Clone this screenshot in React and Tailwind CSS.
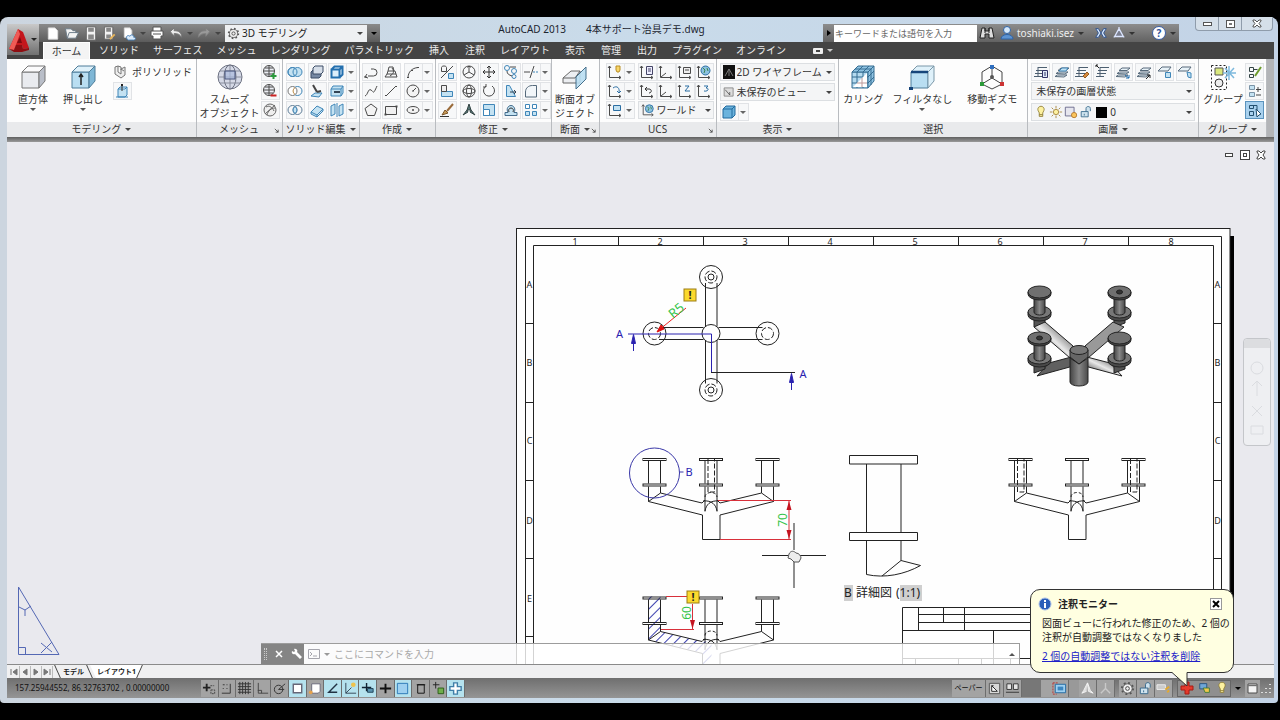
import { useState } from "react";

const B = "#3f86b8";
const L = "#c4e2f2";
const D = "#4a4a4a";

const axes = <path d="M2.5 2v11.500h11M1 4l1.500-2L4 4M12 12l2 1.500-2 1.500" stroke={D} />;
const sheets = (
  <path d="M4 6.500 7 4h8l-3 2.500zM2 9.500 4.500 8H14l-3 2zM1 12.500 3.500 11H13l-3 2z" fill="#e8f2f8" stroke="#56697a" />
);
const stack = <path d="M5 3.500h9M3 6.500h9M2 9.500h9M1 12.500h8M5 3v10" stroke="#4c5f70" />;

const drawings = {
  polysolid: <path d="M2 3l3-1v6l3 2V5l4-2v8l-4 3-6-4zM5 2l3 1v3M8 5l3 2" fill="#eee" stroke="#777" />,
  presspull: (
    <>
      <path d="M3 6h7l2-2v8l-2 2H3zM3 6l2-2h7" fill={L} stroke={B} />
      <path d="M7 8V2" stroke="#333" />
      <path d="M6 1h2v2H6z" fill="#222" />
      <path d="M1 14h12" stroke={B} />
    </>
  ),
  meshAdd: (
    <>
      <circle cx="7" cy="7" r="5.500" fill="#eceff5" stroke={D} />
      <path d="M1.500 7h11M7 1.500v11M3 4h8M3 10h8" stroke={D} />
      <path d="M11.500 9v6M8.500 12h6" stroke="#2a9a3c" strokeWidth="2" />
    </>
  ),
  meshSub: (
    <>
      <circle cx="7" cy="7" r="5.500" fill="#eceff5" stroke={D} />
      <path d="M1.500 7h11M7 1.500v11M3 4h8M3 10h8" stroke={D} />
      <path d="M8.500 12.500h6" stroke="#c22" strokeWidth="2" />
    </>
  ),
  meshRefine: (
    <>
      <circle cx="8" cy="8" r="6" fill="#eee" stroke="#666" />
      <path d="M3 12 13 3M4 5c3-2 6 0 8 4M5 13c1-4 4-7 8-7" stroke="#666" />
    </>
  ),
  union: (
    <>
      <circle cx="5.500" cy="8" r="4.500" fill={L} stroke={B} />
      <circle cx="10.500" cy="8" r="4.500" fill={L} stroke={B} />
      <circle cx="5.500" cy="8" r="4.500" stroke={B} />
    </>
  ),
  subtract: (
    <>
      <circle cx="10.500" cy="8" r="4.500" stroke={B} />
      <circle cx="5.500" cy="8" r="4.500" fill="#fff" stroke="#777" />
      <path d="M8 4.500c-2.500 2-2.500 5 0 7" stroke="#b9853c" />
    </>
  ),
  intersect: (
    <>
      <circle cx="5.500" cy="8" r="4.500" stroke="#5d7c96" />
      <circle cx="10.500" cy="8" r="4.500" stroke="#5d7c96" />
      <path d="M8 4.500c-2.500 2-2.500 5 0 7 2.500-2 2.500-5 0-7z" fill={L} stroke={B} />
    </>
  ),
  faces: (
    <>
      <path d="M2 8l2-2h8v6l-2 2H2z" fill="#7789a3" stroke="#3c4d66" />
      <path d="M4 4l2-2h8v6l-2 2H4z" fill="#d6dee8" stroke="#3c4d66" />
    </>
  ),
  slice: (
    <>
      <path d="M2 13l4-3h7l-3 4z" fill={L} stroke={B} />
      <path d="M4 2l4 7M8 9l4-1" stroke="#444" strokeWidth="2" />
    </>
  ),
  thicken: <path d="M2 10l6-6 6 3-6 6zM2 10v2l6 3v-2M14 7v2l-6 6" fill={L} stroke={B} />,
  shell: (
    <path d="M2.500 5.500h8v8h-8zM2.500 5.500l3-3h8v8l-3 3M10.500 5.500l3-3" fill="#dceefa" stroke="#236fae" strokeWidth="2" />
  ),
  imprint: (
    <>
      <path d="M2 6l2-3h10v7l-2 3H2zM2 6h10v7M12 6l2-3" fill={L} stroke={B} />
      <path d="M5 9h6" stroke="#345" strokeWidth="2" />
    </>
  ),
  separate: <path d="M2 4l4-2v10l-4 2zM10 4l4-2v10l-4 2zM8 1v14" fill={L} stroke={B} />,
  polyline: <path d="M1 13h3M5 12h5.500a3.500 3.500 0 0 0 0-7H8M4 10l-2 3 3 1" stroke={D} />,
  helix: <path d="M2 13h12l-1-3H4zM4 10l1-3h7l1 3M5 7l1-4h4l1 4M7 12c3-2 5-4 2-8" stroke={D} />,
  spline: <path d="M2 13C5 12 5 5 8 7s2 5 6-4" stroke={D} />,
  line: <path d="M3 13 13 3M2 12.500h2M12 3.500h2" stroke={D} />,
  polygon: <path d="M8 2l6 4.500-2.500 7h-7L2 6.500z" fill="#f3f3f3" stroke={D} />,
  rect: (
    <>
      <path d="M2.500 4.500h11v8h-11z" fill="#f0f0f0" stroke={D} />
      <path d="M1.500 12.500h2M12.500 4.500h2" stroke={D} strokeWidth="2" />
    </>
  ),
  arc: <path d="M3 14C3 8 7 4 13 3.500M2 13.500h2M6 6.500h2M12 3.500h2" stroke={D} />,
  circle: (
    <>
      <circle cx="8" cy="8" r="6" fill="#f3f3f3" stroke={D} />
      <path d="M8 8l3-3M7 8h2" stroke={D} />
    </>
  ),
  ellipse: (
    <>
      <ellipse cx="8" cy="8" rx="6" ry="3.500" fill="#f3f3f3" stroke={D} />
      <path d="M8 7v2M7 8h2" stroke={D} />
    </>
  ),
  trimPct: (
    <>
      <path d="M14 2 2 14" stroke={D} />
      <path d="M2.500 3.500c0-2 5-2 5 0v4h-5z" stroke={D} />
      <path d="M9.500 9.500h5v5h-5z" fill={L} stroke={B} />
    </>
  ),
  align: (
    <>
      <path d="M2.500 8.500h11v5h-11z" fill={L} stroke={B} />
      <path d="M2.500 2.500h5v6h-5z" fill="#eee" stroke={D} />
    </>
  ),
  brush: (
    <>
      <path d="M14 2 8 9" stroke="#9a6b3a" strokeWidth="2" />
      <path d="M3 13l3-5 3 3z" fill="#c99a55" stroke="#7a552a" />
      <path d="M1 14.500h9" stroke="#333" />
    </>
  ),
  gizmo: (
    <>
      <circle cx="8" cy="8" r="6" stroke={D} />
      <path d="M8 8V2M8 8l5 3M8 8l-5 3M6.500 3.500 8 2l1.500 1.500" stroke={D} />
    </>
  ),
  move: <path d="M8 2v12M2 8h12M6 4l2-2 2 2M6 12l2 2 2-2M4 6 2 8l2 2M12 6l2 2-2 2" stroke="#333" />,
  rotate3d: (
    <>
      <circle cx="8" cy="8" r="6" stroke={D} />
      <ellipse cx="8" cy="8" rx="2.500" ry="6" stroke={D} />
      <ellipse cx="8" cy="8" rx="6" ry="2.500" stroke={D} />
    </>
  ),
  rotate: <path d="M11 3a5.500 5.500 0 1 1-6 0M5 1v3H2" stroke={D} />,
  scale3d: <path d="M8 2 6 8h4zM6 8l-4 5 5-3zM10 8l4 5-5-3z" fill="#577" stroke="#344" />,
  scale: (
    <>
      <path d="M2.500 2.500h11v11h-11z" fill={L} stroke={B} />
      <path d="M2.500 7.500h6v6h-6z" fill="#fff" stroke={B} />
    </>
  ),
  copy: (
    <>
      <circle cx="4" cy="4" r="2.500" stroke={B} />
      <circle cx="11" cy="7" r="2.500" stroke={B} />
      <circle cx="11" cy="12.500" r="2" stroke={B} />
      <path d="M7 3h6M4 7c0 3 2 4 5 5" stroke={D} />
    </>
  ),
  trim: (
    <>
      <path d="M1 8h6M11 2 7 14" stroke={D} />
      <path d="M10 8h5" stroke={B} strokeDasharray="2 1" />
    </>
  ),
  mirror: (
    <>
      <path d="M3.500 2.500h3l6 11h-9z" fill={L} stroke={B} />
      <path d="M7 9h6M11 7l2 2-2 2" stroke="#345" />
    </>
  ),
  fillet: <path d="M2.500 14V9c0-4 3-6.500 7-6.500h4V14z" fill="#f2f6f9" stroke="#55697a" />,
  offset: (
    <>
      <path d="M2 13.500h12v-3h-3c2-3 0-7-3-7S3 7 5 10.500H2z" fill={L} stroke="#456d8c" />
      <path d="M6 10c-1-2 0-4 2-4s3 2 2 4" stroke="#333" />
    </>
  ),
  array: (
    <>
      <path d="M2.500 2.500h4v4h-4zM9.500 2.500h4v4h-4z" fill="#fff" stroke={B} />
      <path d="M2.500 9.500h4v4h-4zM9.500 9.500h4v4h-4z" fill={L} stroke={B} />
    </>
  ),
  ucsBulb: <>{axes}<path d="M9 2h4v4l-1 2h-2L9 6z" fill="#f8d66a" stroke="#b98d22" /></>,
  ucsRot: <>{axes}<path d="M6 5c4-3 7 0 6 5M10 8l2 2 2-2" stroke="#2b6ea3" /></>,
  ucsView: <>{axes}<path d="M6.500 3.500h7v5h-7z" fill={L} stroke="#2b6ea3" /></>,
  ucsNamed: <>{axes}<path d="M7.500 2.500h6v8h-6zM9 5h3M9 7h3" fill="#eef" stroke="#446" /></>,
  ucsPlain: <>{axes}<path d="M3 13l5-4" stroke={D} /></>,
  ucsPrev: <>{axes}<path d="M6 6h4c3 0 3 4 0 4M8 4 6 6l2 2" stroke="#333" /></>,
  ucsObj: <>{axes}<path d="M6.500 3.500h7v6h-7zM8 6h4" fill="#eee" stroke={D} /></>,
  ucsWorld: (
    <>
      {axes}
      <circle cx="9.500" cy="6.500" r="4.500" fill="#8cc1df" stroke="#2b6ea3" />
      <path d="M7 4l2 2-1 3M11 4l1 3" stroke="#3d8653" />
    </>
  ),
  ucsZ: <>{axes}<path d="M8 3h4L8 8h5" stroke="#2b6ea3" /></>,
  ucs3: <>{axes}<path d="M8 3h4l-2 2c4 0 2 4-2 3" stroke="#2b6ea3" /></>,
  view: <><path d="M1.500 2.500h12v11h-12z" fill="#ddd" stroke="#777" /><path d="M3 5l6 7V8" stroke="#444" /></>,
  cube: <path d="M2 5l3-3h9v9l-3 3H2zM2 5h9v9M11 5l3-3" fill="#6bb3dd" stroke="#226b9e" />,
  lay1: <>{stack}<path d="M9.500 6.500h5v7h-5zM11 9h2M11 11h2" fill="#dfeaf8" stroke="#336" /></>,
  lay2: <>{sheets}<path d="M5 7 8 4h6l-2 3z" fill={L} stroke={B} /></>,
  lay3: <>{stack}<path d="M9 12l4-4 2 2-4 4z" fill="#d58a3e" stroke="#965b1e" /></>,
  lay4: <>{stack}<path d="M1 1l3 3M1 3V1h2" stroke="#222" /></>,
  lay5: <>{sheets}<path d="M10 11l4 3M14 11v3h-3" stroke="#236fae" /></>,
  lay6: <>{sheets}<path d="M10 15l4-4M11 11h3v3" stroke="#222" /></>,
  lay7: <><path d="M1 7l4-4h9l-3 4z" fill="#e8f2f8" stroke="#56697a" /><path d="M8.500 8.500h5v5h-5z" fill={L} stroke={B} /></>,
  lay8: <><path d="M1 7l4-4h9l-3 4z" fill="#e8f2f8" stroke="#56697a" /><path d="M10 8l4 1v5l-3-1z" fill={L} stroke={B} /></>,
  bulb: <path d="M8 1.500c3 0 4.500 3 3 5.500L10 9v4H6V9L5 7c-1.500-2.500 0-5.500 3-5.500zM6 11h4" fill="#fdf1a0" stroke="#8b7a35" />,
  sun: (
    <>
      <circle cx="8" cy="8" r="3" fill="#fdf1a0" stroke="#a5853a" />
      <path d="M8 1v3M8 12v3M1 8h3M12 8h3M3 3l2 2M11 11l2 2M13 3l-2 2M3 13l2-2" stroke="#a5853a" />
    </>
  ),
  vpSun: (
    <>
      <path d="M1.500 2.500h10v10h-10z" fill="#e6e6ee" stroke="#668" />
      <circle cx="11.500" cy="11.500" r="3" fill="#fbc55c" stroke="#b4762a" />
    </>
  ),
  lockOpen: <path d="M2.500 7.500h8v6h-8zM8 7.500V4c0-3 5-3 5 0v3M6 10v2" fill="#cfe3ee" stroke="#38698c" />,
  grpEdit: <><path d="M2.500 3.500h4v4h-4zM2.500 10.500h4v3h-4zM6.500 5.500h4" stroke="#344" /><path d="M8 12l6-9" stroke="#6d9b2c" strokeWidth="2" /></>,
  grpPlus: <><path d="M2.500 2.500h5v4h-5zM2.500 9.500h5v4h-5z" fill={L} stroke="#7a93a6" /><path d="M11 4v5M9 6.500h5M9 12h5" stroke="#444" /></>,
  grpSel: <><path d="M2.500 3.500h4v3h-4zM2.500 9.500h4v4h-4zM6 3.500h4v10" stroke="#24506f" /><path d="M9 7l5 5-2 1-2 2z" fill="#fff" stroke="#24506f" /></>,
  // quick access
  fileNew: <path d="M3 2h7l3 3v9H3z" fill="#fff" stroke="#ddd" />,
  open: <path d="M1 3h6l2 2h3v2h3l-3 6H3zM3 13l2-6h8" fill="#f4f4f4" stroke="#6b7b88" />,
  save: <><path d="M3 1h10v14H3z" fill="#f2f2f2" stroke="#666" /><path d="M5 2h6v4H5zM5 9h6v5H5z" fill="#888" /></>,
  saveAs: <><path d="M2 1h9v13H2z" fill="#f2f2f2" stroke="#666" /><path d="M4 2h5v4H4zM4 9h5v4H4z" fill="#888" /><path d="M8 14l5-5" stroke="#e8b458" strokeWidth="2" /></>,
  cloud: <><path d="M3 2h6l2 3v7H3z" fill="#fff" stroke="#ddd" /><path d="M6 14c-2-3 1-5 3-3 1-3 5-1 4 1 3 0 2 3 0 3H7z" fill="#dcebfa" stroke="#467fb5" /></>,
  print: <path d="M4 6V2h8v4h2v5h-2v3H4v-3H2V6zM4 9h8M4 6h8" fill="#fff" stroke="#555" />,
  undo: <path d="M2 6l4-4v3c5 0 8 2 8 7-2-3-4-4-8-4v3z" fill="#ececec" stroke="#777" />,
  redo: <path d="M14 6l-4-4v3c-5 0-8 2-8 7 2-3 4-4 8-4v3z" fill="#9a9a9a" stroke="#808080" />,
  gear: (
    <>
      <circle cx="8" cy="8" r="5" fill="#eee" stroke="#555" />
      <circle cx="8" cy="8" r="6" stroke="#555" strokeWidth="2" strokeDasharray="2 2.700" />
      <circle cx="8" cy="8" r="2" stroke="#444" />
    </>
  ),
  binoc: <path d="M3 3h3v3h4V3h3l2 10h-5V9H6v4H1zM6 3v5M10 3v5" fill="#ddd" stroke="#222" />,
  user: <><circle cx="8" cy="5" r="3.500" fill="#d5e8fa" stroke="#2f64a8" /><path d="M2 14c0-6 12-6 12 0z" fill="#5d93d1" stroke="#2f64a8" /></>,
  exchange: <path d="M2 3h3l3 5-3 5H2l3-5zM14 3h-3L8 8l3 5h3l-3-5z" fill="#cfe0f6" stroke="#2a4f8c" />,
  tri: <path d="M8 3l5 9H3zM8 1v3M2 13l2-2M14 13l-2-2" fill="#7b7f90" stroke="#dce6ff" strokeWidth="1.500" />,
  help: <circle cx="8" cy="8" r="6.500" fill="#fff" stroke="#3a5fa8" />,
  // status bar
  infer: (
    <>
      <path d="M1 7h8M5 3v8" stroke="#222" strokeWidth="2" />
      <path d="M9.500 9.500h4v4h-4zM9 5h4" stroke="#444" strokeDasharray="2 1" />
    </>
  ),
  snap: <path d="M3 13h9V3M4 4h2M8 4h1M4 8h1M8 8h1" stroke="#333" />,
  grid: <path d="M1 3h14M1 6h14M1 9h14M1 12h14M3 1v13M6 1v13M9 1v13M12 1v13" stroke="#333" />,
  ortho: <path d="M3.500 2v11H14M3 10h4v3" stroke="#444" />,
  polar: <><circle cx="7" cy="9" r="4.500" stroke="#333" /><path d="M7 9l7-6M7 9h6" stroke="#333" /></>,
  osnap: <path d="M3.500 3.500h9v9h-9z" fill="#fff" stroke="#667" strokeWidth="1.500" />,
  osnap3: <><path d="M5 3h9v8l-2 2H5z" fill="#fff" stroke="#667" /><circle cx="4" cy="12" r="2" fill="#e5a24c" /></>,
  otrack: <path d="M13 3 4 12h9" stroke="#234" strokeWidth="1.500" />,
  ducs: <><path d="M3 2v11h11M3 13l6-6" stroke="#345" /><circle cx="11" cy="4" r="2.500" fill="#eec34d" /></>,
  dyn: (
    <>
      <path d="M2 7h10M7 2v9" stroke="#123" strokeWidth="1.500" />
      <path d="M8 8h6v4H8z" fill="#5a94b0" stroke="#1f4258" />
    </>
  ),
  lwt: <path d="M2 8h12M8 3v10" stroke="#111" strokeWidth="2" />,
  tpy: <path d="M2.500 2.500h11v11h-11z" fill="#9ed0f0" stroke="#2a77b5" />,
  qp: <path d="M5 4h7v9H5zM4 4h9" stroke="#111" />,
  sc: <><path d="M2 4h7M5 1v7" stroke="#222" /><path d="M7.500 7.500h6v6h-6z" fill="#6fae4c" stroke="#2c5c1a" /></>,
  monitor: <path d="M6 2h4v4h4v4h-4v4H6v-4H2V6h4z" fill="#fff" stroke="#3f7ea8" strokeWidth="1.500" />,
  model: (
    <>
      <path d="M2.500 2.500h11v11h-11z" fill="#d8d8d8" stroke="#555" />
      <path d="M5 5v6h6zM5 5h2" fill="#fff" stroke="#222" />
    </>
  ),
  quick: <path d="M2 3h5v6H2zM9 3h5v6H9zM1 12h14" fill="#e6e6e6" stroke="#333" />,
  maxvp: <><path d="M3.500 3.500h11v9h-11z" fill="#9ed0f0" stroke="#246ba3" /><path d="M6 6h6v4H6z" fill="#3d86c0" /><path d="M1 2h5M1 2v12h4" stroke="#b33" strokeDasharray="2 1" /></>,
  annot: <path d="M8 2 4 10l-2 3 5-2M8 2l3 8 3 3-5-2z" fill="#ddd" stroke="#f4f4f4" />,
  annot2: <path d="M8 2v6l-5 5M8 8l5 5" stroke="#c9c9c9" strokeWidth="1.500" />,
  hw: <><path d="M1 4h9v5H1z" fill="#ccc" stroke="#eee" /><path d="M10 9l4-3M12 12l2-2" stroke="#e3a92f" strokeWidth="2" /></>,
  plus: <path d="M6 2h4v4h4v4h-4v4H6v-4H2V6h4z" fill="#e53a2c" stroke="#a61d14" />,
  sync: <><path d="M2 3h8v6H2z" fill="#6fa6d8" stroke="#24517e" /><path d="M6 8h7v5H8z" fill="#efc84c" stroke="#3a7a3c" /></>,
  clean: <path d="M2.500 2.500h11v11h-11zM3 4.500h10" fill="#f5f5f5" stroke="#333" />,
};

function Icon({ name, className = "w-4 h-4" }) {
  return (
    <svg viewBox="0 0 16 16" fill="none" className={`${className} shrink-0`} aria-hidden="true">
      {drawings[name]}
    </svg>
  );
}

function Caret({ className = "border-t-[#444]" }) {
  return <span className={`w-0 h-0 shrink-0 border-x-[3px] border-x-transparent border-t-[3px] ${className}`} />;
}

function Tool({ name, arrow, active }) {
  return (
    <div className="flex">
      <button
        aria-label={name}
        className={`w-[19px] h-[18px] flex items-center justify-center border ${
          active ? "bg-[#a9d1ee] border-[#5b93bd]" : "bg-[#f7f8f9] border-[#e1e3e6]"
        }`}
      >
        <Icon name={name} />
      </button>
      {arrow && (
        <button aria-label={`${name} options`} className="w-[10px] h-[18px] flex items-center justify-center border border-l-0 border-[#e1e3e6] bg-[#f7f8f9]">
          <Caret className="border-t-[#666]" />
        </button>
      )}
    </div>
  );
}

function ToolColumn({ items, arrow }) {
  return (
    <div className="flex flex-col gap-px">
      {items.map((n) => (
        <Tool key={n} name={n} arrow={arrow} />
      ))}
    </div>
  );
}

function BigButton({ lines, icon, arrow, width }) {
  return (
    <button className={`${width} shrink-0 flex flex-col items-center leading-[14px] whitespace-nowrap`}>
      <svg viewBox="0 0 28 28" fill="none" className="w-7 h-7 mb-px" aria-hidden="true">
        {icon}
      </svg>
      {lines.map((l) => (
        <span key={l}>{l}</span>
      ))}
      {arrow && <Caret className="border-t-[#555] mt-[2px]" />}
    </button>
  );
}

function Panel({ title, arrow, launcher, width, children }) {
  return (
    <section className={`${width} flex flex-col border-r border-[#b9bcc0]`}>
      <div className="h-[63px] flex pt-1 px-[2px] bg-[#fdfdfd]">{children}</div>
      <div className="relative h-[15px] flex items-center justify-center gap-1 bg-[#e9eaec] leading-[15px] whitespace-nowrap">
        {title}
        {arrow && <Caret />}
        {launcher && (
          <svg viewBox="0 0 6 6" className="absolute right-[3px] bottom-1 w-[5px] h-[5px]" fill="none" aria-hidden="true">
            <path d="M1 1l4 4M5 2v3H2" stroke="#444" />
          </svg>
        )}
      </div>
    </section>
  );
}

function Combo({ label, value, icon, className = "" }) {
  return (
    <div className={`flex items-center h-[18px] px-[2px] border border-[#dcdfe2] bg-[#f4f5f6] ${className}`}>
      {icon}
      <select aria-label={label} defaultValue={value} className="appearance-none flex-1 min-w-0 bg-transparent outline-none pl-[2px] leading-4">
        <option>{value}</option>
      </select>
      <Caret />
    </div>
  );
}

const big = {
  box: (
    <>
      <path d="M3 9h17v16H3z" fill="#e9ebef" stroke="#777" />
      <path d="M3 9l6-6h17l-6 6z" fill="#fbfbfc" stroke="#777" />
      <path d="M20 9l6-6v15l-6 7z" fill="#b9bec8" stroke="#777" />
    </>
  ),
  extrude: (
    <>
      <path d="M3 9h17v16H3z" fill="#b9def2" stroke="#4e7d99" />
      <path d="M3 9l6-6h17l-6 6z" fill="#dff1fa" stroke="#4e7d99" />
      <path d="M20 9l6-6v15l-6 7z" fill="#7fb7d6" stroke="#4e7d99" />
      <path d="M12 22V12M10 14l2-3 2 3" stroke="#222" strokeWidth="1.500" />
    </>
  ),
  sphere: (
    <>
      <circle cx="14" cy="14" r="12" fill="#d5d9e6" stroke="#6b7080" />
      <ellipse cx="14" cy="14" rx="6" ry="12" stroke="#6b7080" />
      <path d="M2 14h24M4 8h20M4 20h20M14 2v24" stroke="#8a8f9e" />
      <path d="M9 8h10v8H9z" fill="#aab9dc" fillOpacity=".7" stroke="#46527a" />
    </>
  ),
  section: (
    <>
      <path d="M2 20v-5l8-7h9v12z" fill="#eceef1" stroke="#666" />
      <path d="M2 15h12l5-7" stroke="#666" />
      <path d="M15 14l10-10v12L15 26z" fill="#b9def2" fillOpacity=".9" stroke="#456f8b" />
    </>
  ),
  culling: (
    <>
      <path d="M3 9h16v16H3z" fill="#b5dbf0" stroke="#356c91" />
      <path d="M3 9l6-6h16l-6 6zM19 9l6-6v15l-6 7z" fill="#8fc3e2" stroke="#356c91" />
      <path d="M8 9v16M14 9v16M3 14h16M3 20h16M8 9l6-6M14 9l6-6M6 6h16v16M19 14l6-6M19 20l6-6" stroke="#356c91" />
      <path d="M4 24 18 10v14z" fill="#fff" />
      <path d="M8 20h10M13 15v9" stroke="#b99" />
    </>
  ),
  filter: (
    <>
      <path d="M3 9h17v16H3z" fill="#b9def2" stroke="#4e7d99" />
      <path d="M3 9l6-6h17l-6 6zM20 9l6-6v15l-6 7z" fill="#dff1fa" stroke="#7a97a8" />
      <path d="M3 9h17" stroke="#16457a" strokeWidth="2.500" />
      <path d="M1 24h4v3H1z" fill="#16457a" />
    </>
  ),
  moveGizmo: (
    <>
      <path d="M14 3l10 6v12l-10 5-10-5V9zM14 4v11l10 6M14 15 4 21" stroke="#444" />
      <path d="M12 2h4v4h-4z" fill="#2f6fc0" />
      <path d="M22 19h4v4h-4z" fill="#c33" />
      <path d="M2 19h4v4H2z" fill="#2c9a3a" />
      <circle cx="14" cy="14" r="2" fill="#555" />
    </>
  ),
  group: (
    <>
      <path d="M2.500 2.500h15v24h-15z" stroke="#222" strokeDasharray="2 2" />
      <path d="M6 5h8v7H6z" fill="#d9e87d" stroke="#555" />
      <circle cx="10" cy="20" r="4" fill="#eee" stroke="#333" />
      <path d="M20 3v14M14 10h13M16 5l9 10M25 5l-9 10" stroke="#7db9dd" strokeWidth="1.500" />
    </>
  ),
};

const tabs = ["ソリッド", "サーフェス", "メッシュ", "レンダリング", "パラメトリック", "挿入", "注釈", "レイアウト", "表示", "管理", "出力", "プラグイン", "オンライン"];

function Header() {
  return (
    <header className="flex h-[42px] text-white">
      <div className="w-8 pt-[7px] flex flex-col bg-[#444] [clip-path:inset(7px_0_0_0)]">
        <button aria-label="Application menu" className="h-[31px] flex items-center bg-linear-to-b from-[#c9c9c9] to-[#717171]">
          <svg viewBox="0 0 24 28" className="w-6 h-7" aria-hidden="true">
            <path d="M2 23 11 3l5 3 6 16-6 1-1-4H9l-2 5z" fill="#c4161c" />
            <path d="M11 3 2 23l5 1 6-16z" fill="#ef5a55" />
            <path d="M10 17l3-6 2 6z" fill="#7e0b10" />
            <path d="M2 23l5 1 2-5h6l1 4 6-1v2l-7 2H7z" fill="#8e0e12" />
          </svg>
          <Caret className="border-t-[#222]" />
        </button>
      </div>
      <div className="flex-1 flex flex-col">
        <div className="flex h-[25px]">
          <div className="mt-[7px] flex items-center bg-linear-to-b from-[#8a8a8a] to-[#5c5c5c] pl-[6px]">
            <div className="flex items-center gap-[3px]">
              {["fileNew", "open", "save", "saveAs", "cloud"].map((n) => (
                <button key={n} aria-label={n}><Icon name={n} className="w-4 h-[15px]" /></button>
              ))}
              <Caret />
              <button aria-label="print"><Icon name="print" /></button>
              <button aria-label="undo"><Icon name="undo" className="w-4 h-[15px]" /></button>
              <Caret />
              <button aria-label="redo"><Icon name="redo" className="w-4 h-[15px]" /></button>
              <Caret />
            </div>
            <div className="ml-1 flex items-center w-[142px] h-[17px] bg-[#eef0f2] text-[#222] pl-[2px] pr-1">
              <Icon name="gear" className="w-[13px] h-[13px]" />
              <select aria-label="Workspace" className="appearance-none flex-1 min-w-0 bg-transparent outline-none pl-[2px] leading-4">
                <option>3D モデリング</option>
              </select>
              <Caret />
            </div>
            <button aria-label="Customize" className="w-[13px] flex justify-center"><Caret className="border-t-black" /></button>
          </div>
          <h1 className="flex-1 flex items-center justify-center gap-5 text-[#1c2530] whitespace-nowrap">
            <span>AutoCAD 2013</span>
            <span>4本サポート治具デモ.dwg</span>
          </h1>
          <div className="mt-[7px] w-[356px] flex items-center bg-linear-to-b from-[#8d8d8d] to-[#626262]">
            <button aria-label="Collapse" className="w-[11px] shrink-0 flex justify-center">
              <span className="border-y-[3px] border-y-transparent border-l-[4px] border-l-black" />
            </button>
            <input aria-label="Search" placeholder="キーワードまたは語句を入力" className="w-[143px] shrink-0 h-[17px] bg-white text-[9px] px-px outline-none placeholder:text-[#666]" />
            <div className="flex-1 flex items-center pl-[2px]">
              <Icon name="binoc" />
              <Icon name="user" className="w-4 h-4 ml-1" />
              <button className="ml-[2px] w-[61px] text-left leading-4 text-[#eee]">toshiaki.isez</button>
              <Caret className="border-t-[#333]" />
              <Icon name="exchange" className="w-[14px] h-[14px] ml-[10px]" />
              <Icon name="tri" className="w-[14px] h-[14px] ml-1" />
              <Caret className="border-t-[#333] ml-[3px]" />
              <button aria-label="Help" className="relative ml-4 w-4 h-4 grid place-items-center">
                <Icon name="help" className="absolute inset-0 w-4 h-4" />
                <span className="relative text-[10px] leading-4 font-bold text-[#2c4f9b]">?</span>
              </button>
              <Caret className="border-t-[#333] ml-[3px]" />
            </div>
          </div>
          <div className="ml-4 mr-px flex h-[14px] w-[78px] rounded-b border border-t-0 border-[#8f9cab] bg-[#d5dfe9] divide-x divide-[#8f9cab]">
            <button aria-label="Minimize" className="flex-1 grid place-items-center"><span className="w-[9px] h-1 border border-[#555] bg-white" /></button>
            <button aria-label="Restore" className="flex-1 grid place-items-center"><span className="w-[9px] h-2 border border-[#555] bg-white grid place-items-center"><span className="w-[3px] h-[2px] bg-[#777]" /></span></button>
            <button aria-label="Close" className="w-[30px] grid place-items-center">
              <svg viewBox="0 0 10 9" className="w-[10px] h-[9px]" aria-hidden="true">
                <path d="M1 1h2l2 2 2-2h2v1L7 4.500 9 7v1H7L5 6 3 8H1V7l2-2.500L1 2z" fill="#fff" stroke="#555" />
              </svg>
            </button>
          </div>
        </div>
        <nav className="h-[17px] flex items-center bg-[#444] pl-1 leading-[17px] whitespace-nowrap">
          <button className="self-stretch px-[7px] mr-[2px] w-[47px] bg-[#f4f4f4] text-[#333] border border-b-0 border-white leading-4">ホーム</button>
          {tabs.map((t) => (
            <button key={t} className="px-[7px] min-w-9 text-[#ececec]">{t}</button>
          ))}
          <button aria-label="Ribbon display" className="ml-5 flex items-center gap-1">
            <span className="w-[10px] h-[6px] bg-[#eee] rounded-[1px] grid place-items-center"><span className="w-1 h-[2px] bg-[#444]" /></span>
            <Caret className="border-t-[#ccc]" />
          </button>
        </nav>
      </div>
    </header>
  );
}

function Ribbon() {
  return (
    <div className="flex bg-[#fdfdfd] text-[#333]">
      <Panel title="モデリング" arrow width="w-[190px]">
        <BigButton lines={["直方体"]} icon={big.box} arrow width="w-[48px]" />
        <BigButton lines={["押し出し"]} icon={big.extrude} arrow width="w-[52px]" />
        <div className="flex flex-col gap-px pl-1">
          <button className="flex items-center gap-[3px] h-[18px] whitespace-nowrap"><Icon name="polysolid" />ポリソリッド</button>
          <Tool name="presspull" />
        </div>
      </Panel>
      <Panel title="メッシュ" launcher width="w-[86px]">
        <BigButton lines={["スムーズ", "オブジェクト"]} icon={big.sphere} width="w-[62px]" />
        <ToolColumn items={["meshAdd", "meshSub", "meshRefine"]} />
      </Panel>
      <Panel title="ソリッド編集" arrow width="w-[77px]">
        <div className="flex gap-px pl-px">
          <ToolColumn items={["union", "subtract", "intersect"]} />
          <div className="w-px" />
          <ToolColumn items={["faces", "slice", "thicken"]} />
          <ToolColumn items={["shell", "imprint", "separate"]} arrow />
        </div>
      </Panel>
      <Panel title="作成" arrow width="w-[76px]">
        <div className="flex gap-px">
          <ToolColumn items={["polyline", "spline", "polygon"]} />
          <ToolColumn items={["helix", "line", "rect"]} />
          <div className="w-px" />
          <ToolColumn items={["arc", "circle", "ellipse"]} arrow />
        </div>
      </Panel>
      <Panel title="修正" arrow width="w-[116px]">
        <div className="flex gap-px">
          <ToolColumn items={["trimPct", "align", "brush"]} />
          <div className="w-px" />
          <ToolColumn items={["gizmo", "rotate3d", "scale3d"]} />
          <ToolColumn items={["move", "rotate", "scale"]} />
          <div className="w-px" />
          <ToolColumn items={["copy", "mirror", "offset"]} />
          <ToolColumn items={["trim", "fillet", "array"]} arrow />
        </div>
      </Panel>
      <Panel title="断面" arrow launcher width="w-[48px]">
        <BigButton lines={["断面オブ", "ジェクト"]} icon={big.section} width="w-[43px]" />
      </Panel>
      <Panel title="UCS" launcher width="w-[117px]">
        <div className="flex gap-[3px] pl-1">
          <ToolColumn items={["ucsBulb", "ucsRot", "ucsView"]} arrow />
          <div className="flex flex-col gap-px">
            <div className="flex">
              {["ucsNamed", "ucsPlain", "ucsObj", "ucsWorld"].map((n) => <Tool key={n} name={n} />)}
            </div>
            <div className="flex">
              {["ucsPrev", "ucsPlain", "ucsZ", "ucs3"].map((n) => <Tool key={n} name={n} />)}
            </div>
            <Combo label="UCS" value="ワールド" icon={<Icon name="ucsWorld" className="w-[14px] h-[14px]" />} className="w-[76px]" />
          </div>
        </div>
      </Panel>
      <Panel title="表示" arrow width="w-[123px]">
        <div className="flex-1 flex flex-col gap-[2px] px-px">
          <Combo
            label="表示スタイル"
            value="2D ワイヤフレーム"
            icon={
              <svg viewBox="0 0 12 14" className="w-3 h-[14px] shrink-0" aria-hidden="true">
                <path d="M0 0h12v14H0z" fill="#111" />
                <path d="M2 11l4-7 4 7M6 4v7" stroke="#777" fill="none" />
              </svg>
            }
          />
          <Combo label="ビュー" value="未保存のビュー" icon={<Icon name="view" className="w-3 h-3" />} />
          <Tool name="cube" arrow />
        </div>
      </Panel>
      <Panel title="選択" width="flex-1">
        <BigButton lines={["カリング"]} icon={big.culling} width="w-[44px]" />
        <BigButton lines={["フィルタなし"]} icon={big.filter} arrow width="w-[74px]" />
        <BigButton lines={["移動ギズモ"]} icon={big.moveGizmo} arrow width="w-[66px]" />
      </Panel>
      <Panel title="画層" arrow width="w-[171px]">
        <div className="flex-1 flex flex-col gap-px px-px">
          <div className="flex justify-between">
            {["lay1", "lay2", "lay3", "lay4", "lay5", "lay6", "lay7", "lay8"].map((n) => <Tool key={n} name={n} />)}
          </div>
          <Combo label="画層状態" value="未保存の画層状態" />
          <Combo
            label="画層"
            value="0"
            className="mt-[2px]"
            icon={
              <>
                <Icon name="bulb" className="w-[14px] h-[14px] mr-px" />
                <Icon name="sun" className="w-[14px] h-[14px]" />
                <Icon name="vpSun" className="w-[14px] h-[14px] ml-px" />
                <Icon name="lockOpen" className="w-[14px] h-[14px] ml-px mr-[3px]" />
                <span className="w-[11px] h-[11px] bg-black mr-px" />
              </>
            }
          />
        </div>
      </Panel>
      <Panel title="グループ" arrow width="w-[68px]">
        <BigButton lines={["グループ"]} icon={big.group} width="w-[44px]" />
        <div className="flex flex-col gap-px">
          <Tool name="grpEdit" />
          <Tool name="grpPlus" />
          <Tool name="grpSel" active />
        </div>
      </Panel>
      <div className="w-[7px] bg-[#b3b5b8]" />
    </div>
  );
}

function Flanges({ x }) {
  return (
    <>
      <rect x={x - 11.5} y="458.500" width="23" height="2" />
      <rect x={x - 11.5} y="484" width="23" height="2" />
      <path d={`M${x - 6} 461v22.500M${x + 6} 461v22.500`} />
    </>
  );
}

// elevation of the four-armed support, drawn about x = 711
function Elevation({ dashed, hatched }) {
  return (
    <g stroke="#222" fill="none">
      {hatched && (
        <path d="M648.500 458h12v35l42 10h9v50h-9v-38l-54-13.500z" fill="url(#hatch)" stroke="none" />
      )}
      <Flanges x={654.5} />
      <Flanges x={711} />
      <Flanges x={767.5} />
      <path d="M648.500 486.500v15l54 13.500v24.500h17.500V515l53.500-13.500v-15M660.500 486.500V493l41.500 10 3-3M761.500 486.500V493l-41.500 10-3-3M660.500 493l-12 8.500M761.500 493l12 8.500" />
      <path d="M705 486.500v25M717 486.500v25" />
      <path d="M703 501c9-1 13 4 14 10M719 501c-9-1-13 4-14 10" />
      <path d="M705 497c0-6 12-6 12 0" strokeDasharray="3 2" />
      {dashed.map((x) => (
        <path key={x} d={`M${x - 3} 459v33h6.500v-33`} strokeDasharray="5 2" />
      ))}
    </g>
  );
}

function Spool({ x, y, hole }) {
  return (
    <g stroke="#222">
      <path d={`M${x - 5.5} ${y + 22}v13l11-4v-9z`} fill="#555" />
      <path d={`M${x - 11.5} ${y + 20}v3a11.500 6 0 0 0 23 0v-3z`} fill="#4a4a4a" />
      <ellipse cx={x} cy={y + 20} rx="11.500" ry="6" fill="#777" />
      <path d={`M${x - 5.5} ${y + 4}v16a5.500 3 0 0 0 11 0v-16z`} fill="url(#steel)" />
      <path d={`M${x - 11.5} ${y}v2a11.500 6 0 0 0 23 0v-2z`} fill="#444" />
      <ellipse cx={x} cy={y} rx="11.500" ry="6" fill="#707070" />
      {hole && <ellipse cx={x} cy={y} rx="3" ry="2" fill="#333" />}
    </g>
  );
}

function Warning({ x, y }) {
  return (
    <g>
      <rect x={x} y={y} width="12" height="12" fill="#fbd92e" stroke="#9b7d14" />
      <text x={x + 6} y={y + 10} fontSize="11" fontWeight="700" textAnchor="middle" fill="#222">!</text>
    </g>
  );
}

function Drawing() {
  return (
    <svg viewBox="7 142 1267 522" preserveAspectRatio="xMinYMin slice" className="absolute inset-0 w-full h-full" fontFamily="'Noto Sans','Noto Sans CJK JP',sans-serif">
      <defs>
        <pattern id="hatch" width="7" height="7" patternUnits="userSpaceOnUse" patternTransform="rotate(45)">
          <path d="M.5 0v7" stroke="#3a3fae" />
        </pattern>
        <linearGradient id="steel">
          <stop offset="0" stopColor="#444" />
          <stop offset=".5" stopColor="#888" />
          <stop offset="1" stopColor="#4a4a4a" />
        </linearGradient>
        <linearGradient id="shine" x1="0" y1="1" x2="1" y2="0">
          <stop offset=".2" stopColor="#555" />
          <stop offset=".5" stopColor="#e8e8e8" />
          <stop offset=".8" stopColor="#666" />
        </linearGradient>
      </defs>

      {/* sheet and border */}
      <path d="M1230 236h4v464h-4z" fill="#000" />
      <rect x="516.500" y="228.500" width="713.500" height="470" fill="#fefefe" stroke="#222" />
      <g fill="none" stroke="#222">
        <path d="M525.500 700V236.500h696V700M533.500 700V245.500h680V700" />
        {[618.5, 703.5, 788.5, 873.5, 958.5, 1043.5, 1128.5].map((x) => (
          <path key={x} d={`M${x} 236v9`} />
        ))}
        {[323.5, 402.5, 480.5, 558.5, 636.5].map((y) => (
          <path key={y} d={`M525 ${y}h8M1213 ${y}h8`} />
        ))}
      </g>
      <g fontSize="9" textAnchor="middle" fill="#222">
        {[575, 660, 745, 830, 915, 1000, 1085, 1171].map((x, i) => (
          <text key={x} x={x} y="245">{i + 1}</text>
        ))}
        {[["A", 288], ["B", 366], ["C", 444], ["D", 524], ["E", 602]].map(([c, y]) => (
          <g key={c}>
            <text x="529.500" y={y}>{c}</text>
            <text x="1217.500" y={y}>{c}</text>
          </g>
        ))}
      </g>

      {/* plan */}
      <g fill="none" stroke="#222">
        <circle cx="711" cy="333.500" r="9" />
        {[[711, 277], [711, 390], [654.5, 333.5], [767.5, 333.5]].map(([x, y]) => (
          <g key={`${x}-${y}`}>
            <circle cx={x} cy={y} r="11.500" />
            <circle cx={x} cy={y} r="6" strokeDasharray="5 2" />
          </g>
        ))}
        <circle cx="711" cy="277" r="3" />
        <circle cx="711" cy="390" r="3" />
        <path d="M705.500 283v43.500M717 283v43.500M705.500 340v43.500M717 340v43.500M659 327.500h44.500M659 339.500h44.500M718.500 327.500h44M718.500 339.500h44" />
      </g>
      <g fill="none" stroke="#2a22b0">
        <path d="M628 334h83.500v38.500" />
        <path d="M711 372.500h84" stroke="#222" />
        <path d="M633.500 351v-9M791.500 390v-9" />
        <path d="M633.500 334.500l-2 9h4zM791.500 373.500l-2 9h4z" fill="#2a22b0" />
      </g>
      <g fill="#2a22b0" fontSize="11" textAnchor="middle">
        <text x="619.500" y="338">A</text>
        <text x="803" y="378">A</text>
        <text x="689" y="476">B</text>
      </g>
      <path d="M686 308l-27 22" stroke="#e22" />
      <path d="M657 332l4-7 3 4z" fill="#d11" stroke="#d11" />
      <text fontSize="13" fill="#35c44a" textAnchor="middle" transform="translate(679 314) rotate(-39)">R5</text>
      <Warning x={684} y={289} />

      {/* front elevation */}
      <Elevation dashed={[711]} />
      <circle cx="654.500" cy="473" r="25" fill="none" stroke="#3a38a8" />
      <path d="M679.500 472h4" stroke="#3a38a8" />
      <path d="M718 500.500h73M720 539.500h71M789 501v38" stroke="#d8303a" fill="none" />
      <path d="M789 501l-2.500 9h5zM789 539l-2.500-9h5z" fill="#c41420" />
      <text fontSize="12" fill="#35c44a" textAnchor="middle" transform="translate(787 520) rotate(-90)">70</text>

      {/* side elevation */}
      <g transform="translate(366 0)"><Elevation dashed={[654.5, 767.5]} /></g>

      {/* section */}
      <g transform="translate(0 138.500)"><Elevation dashed={[]} hatched /></g>
      <path d="M666 596.500h26M661 629.500h33M692.500 604v25" stroke="#d8303a" />
      <path d="M692.500 629l-2.500-9h5z" fill="#c41420" />
      <text fontSize="12" fill="#35c44a" textAnchor="middle" transform="translate(691 613) rotate(-90)">60</text>
      <Warning x={687} y={591} />

      {/* detail B */}
      <path
        d="M849.500 455.500h68v8.500h-68zM849.500 532.500h68v8h-68zM866.500 464v68.500M901 464v68.500M866.500 540.500v34c18 4 38 0 54-9l-19.500-5v-20M901 560.500 882 576"
        fill="none"
        stroke="#222"
      />
      <path d="M844 585h9v16h-9zM900 585h22v16h-22z" fill="#cfcfcf" />
      <text y="597" fontSize="12" fill="#222"><tspan x="844">B</tspan><tspan x="856">詳細図</tspan><tspan x="896">(1:1)</tspan></text>

      {/* title block */}
      <path d="M1213 607.500H902.500V700M918.500 607v23M943.500 607v15M964.500 607v23M918 614.500h295M918 622.500h295M902 630.500h311M993.500 630v34M902 658.500h311M915.500 658v10M958.500 658v10M981.500 658v10M1010.500 658v10" fill="none" stroke="#222" />

      {/* isometric */}
      <g>
        <Spool x={1039.5} y={292} />
        <Spool x={1119.5} y={292} hole />
        <g stroke="#222">
          <path d="M1034 327l11-5 28 24-3 12z" fill="url(#shine)" />
          <path d="M1124 327l-11-5-28 24 3 12z" fill="#999" />
          <path d="M1037 376l12-13 26-7 2 9z" fill="#606060" />
          <path d="M1122 376l-12-13-27-7-2 9z" fill="url(#shine)" />
          <path d="M1070 358v24a9 4 0 0 0 18 0v-24l-9 6z" fill="url(#steel)" />
          <path d="M1070 350v7l9 7 9-7v-7z" fill="#666" />
          <ellipse cx="1079" cy="350" rx="9" ry="4.500" fill="#777" />
        </g>
        <Spool x={1039.5} y={338} hole />
        <Spool x={1119.5} y={338} />
      </g>

      {/* crosshair */}
      <path d="M794 523v27M794 562v26M762 555.500h26M800 555.500h26" stroke="#222" />
      <path d="M789 554c2-4 5-3 7-1 3 0 5 3 5 5l-2 4h-5l-3-3-3-1z" fill="#eee" stroke="#555" />

      {/* ucs icon */}
      <path d="M18.500 587v67.500H59zM18.500 647.500h7v7M19 607l6 3 6-4M25 610v6M41 643l11 9M41 653l11-11" fill="none" stroke="#5468b4" />
    </svg>
  );
}

function Canvas() {
  return (
    <main className="relative flex-1 min-h-[400px] overflow-hidden bg-[#e9e9ee]">
      <Drawing />
      <div className="absolute top-2 right-2 flex gap-[6px]">
        <button aria-label="Minimize drawing" className="w-[10px] h-[10px] grid place-items-center"><span className="w-2 h-1 border border-[#444] bg-white" /></button>
        <button aria-label="Restore drawing" className="w-[10px] h-[10px] border border-[#444] bg-white grid place-items-center"><span className="w-1 h-1 border border-[#444]" /></button>
        <button aria-label="Close drawing" className="w-[10px] h-[10px]">
          <svg viewBox="0 0 10 10" aria-hidden="true"><path d="M1 1h2l2 2 2-2h2v1L7 5l2 3v1H7L5 7 3 9H1V8l2-3-2-3z" fill="#fff" stroke="#444" /></svg>
        </button>
      </div>
      <div className="absolute right-[3px] top-[196px] w-7 h-[108px] rounded border border-[#c4c6ca] bg-[#eeeff2]">
        <div className="h-[9px] bg-[#dcdde0] rounded-t" />
        <svg viewBox="0 0 26 96" className="w-[26px] h-24" fill="none" stroke="#dadce0" aria-hidden="true">
          <circle cx="13" cy="20" r="6" />
          <path d="M13 34v14M8 38l5-5 5 5M8 58l10 10M18 58 8 68M7 78h12v8H7z" />
        </svg>
      </div>
      <div className="absolute bottom-0 left-[254px] right-[254px] h-[21px] flex border-t border-[#9c9c9c] border-r">
        <div className="w-[43px] flex items-center gap-2 pl-[3px] bg-[#858585]">
          <span className="w-[3px] h-3 border-x border-dotted border-[#ccc]" />
          <button aria-label="Close command line">
            <svg viewBox="0 0 8 8" className="w-2 h-2" aria-hidden="true"><path d="M1 1l6 6M7 1 1 7" stroke="#fff" strokeWidth="1.500" /></svg>
          </button>
          <button aria-label="Customize command line">
            <svg viewBox="0 0 12 12" className="w-3 h-3" aria-hidden="true"><path d="M1 3l2 1 1-1-1-2c3-1 4 2 3 3l5 5-2 2-5-5c-2 1-4-1-3-3z" fill="#fff" /></svg>
          </button>
        </div>
        <div className="flex-1 flex items-center gap-1 pl-1 pr-1 bg-white/80">
          <svg viewBox="0 0 12 10" className="w-3 h-[10px]" fill="none" aria-hidden="true"><path d="M.5.500h11v9H.5zM2 3l2 2-2 2M5 7h4" stroke="#a5a5ad" /></svg>
          <Caret className="border-t-[#999]" />
          <input aria-label="Command" placeholder="ここにコマンドを入力" className="flex-1 min-w-0 h-4 bg-transparent outline-none placeholder:text-[#a9a9a9]" />
          <span className="w-0 h-0 border-x-[3px] border-x-transparent border-b-[3px] border-b-[#555]" />
        </div>
      </div>
    </main>
  );
}

function LayoutTabs() {
  return (
    <div className="h-[14px] flex items-center bg-[#f0f0f1] border-t border-[#8a8a8a] pl-[2px] text-[7px] leading-[13px] font-bold text-[#222] whitespace-nowrap">
      {["M2 2v6M8 2 4 5l4 3z", "M7 2 3 5l4 3z", "M3 2l4 3-4 3z", "M2 2l4 3-4 3zM8 2v6"].map((d) => (
        <button key={d} aria-label="Scroll tabs" className="w-[11px] h-3 grid place-items-center border-r border-[#bbb]">
          <svg viewBox="0 0 10 10" className="w-[10px] h-[10px]" aria-hidden="true"><path d={d} fill="#777" stroke="#777" /></svg>
        </button>
      ))}
      <span className="ml-1 w-px h-[13px] bg-[#444] skew-x-[24deg]" />
      <button className="w-[31px]">モデル</button>
      <span className="w-px h-[13px] bg-[#444] skew-x-[24deg]" />
      <button className="h-[13px] w-[53px] bg-white [clip-path:polygon(0_0,100%_0,calc(100%-6px)_100%,6px_100%)]">レイアウト1</button>
      <span className="-ml-1 w-px h-[13px] bg-[#444] -skew-x-[24deg]" />
    </div>
  );
}

const modes = ["infer", "snap", "grid", "ortho", "polar", "osnap", "osnap3", "otrack", "ducs", "dyn", "lwt", "tpy", "qp", "sc", "monitor"];
const modesOn = ["osnap", "otrack", "ducs", "dyn", "tpy", "monitor"];

function StatusButton({ name }) {
  return (
    <button aria-label={name} className="w-[18px] h-[17px] grid place-items-center bg-[#a3a3a3] border-r border-[#6d6d6d]">
      <Icon name={name} className="w-[15px] h-[15px]" />
    </button>
  );
}

function StatusBar() {
  return (
    <footer className="h-5 flex items-center bg-linear-to-b from-[#6f6f6f] to-[#959595] text-[8px] text-[#111] whitespace-nowrap">
      <div className="w-[194px] pl-2">157.25944552, 86.32763702 , 0.00000000</div>
      <div className="w-[264px] flex">
        {modes.map((m) => (
          <button
            key={m}
            aria-label={m}
            className={`flex-1 h-[17px] grid place-items-center border-r border-[#6d6d6d] ${modesOn.includes(m) ? "bg-[#b5e2ee]" : "bg-[#a3a3a3]"}`}
          >
            <Icon name={m} className="w-[15px] h-[15px]" />
          </button>
        ))}
      </div>
      <div className="flex-1" />
      <button className="w-[34px] h-[17px] bg-[#a3a3a3] border-r border-[#6d6d6d] text-[7px]">ペーパー</button>
      <StatusButton name="model" />
      <StatusButton name="quick" />
      <div className="w-[19px] h-[17px] bg-[#777]" />
      <div className="w-[10px] h-[17px] bg-[#a3a3a3]" />
      <StatusButton name="maxvp" />
      <div className="w-[10px] h-[17px] bg-[#999]" />
      <StatusButton name="annot" />
      <StatusButton name="annot2" />
      <div className="w-[4px]" />
      <StatusButton name="gear" />
      <StatusButton name="lockOpen" />
      <StatusButton name="hw" />
      <div className="ml-1 w-[54px] h-[17px] flex items-center justify-around bg-[#8f8f8f] border border-[#666]">
        <Icon name="plus" />
        <Icon name="sync" className="w-[14px] h-[14px]" />
        <Icon name="bulb" className="w-[14px] h-[14px]" />
      </div>
      <button aria-label="Status bar menu" className="w-[14px] grid place-items-center"><Caret className="border-t-black" /></button>
      <button aria-label="Clean screen" className="w-[15px] h-[17px] grid place-items-center bg-[#a3a3a3]"><Icon name="clean" className="w-[13px] h-[13px]" /></button>
      <svg viewBox="0 0 14 14" className="w-[14px] h-[14px]" aria-hidden="true"><path d="M10 3v1M10 7v1M10 11v1M6 7v1M6 11v1M2 11v1" stroke="#ddd" strokeWidth="2" /></svg>
    </footer>
  );
}

function Balloon({ onClose }) {
  return (
    <aside className="absolute right-[44px] bottom-[30px] w-[204px] h-[84px] rounded-[10px] border border-[#333] bg-[#ffffe1] px-[11px] pt-[6px] text-[#222] whitespace-nowrap">
      <div className="flex items-center h-4">
        <svg viewBox="0 0 14 14" className="w-[14px] h-[14px] -ml-[4px]" aria-hidden="true">
          <circle cx="7" cy="7" r="6" fill="#2c5fb8" stroke="#a9bfe6" />
          <path d="M7 3v2M7 6v5" stroke="#fff" strokeWidth="2" />
        </svg>
        <h2 className="ml-[6px] flex-1 font-bold">注釈モニター</h2>
        <button aria-label="Close" onClick={onClose} className="w-3 h-3 border border-[#999] bg-white grid place-items-center">
          <svg viewBox="0 0 8 8" className="w-2 h-2" aria-hidden="true"><path d="M1 1l6 6M7 1 1 7" stroke="#000" strokeWidth="2" /></svg>
        </button>
      </div>
      <p className="mt-1 leading-[14px]">
        図面ビューに行われた修正のため、2 個の
        <br />
        注釈が自動調整ではなくなりました
      </p>
      <a href="#" className="block mt-[5px] leading-[14px] text-[#2020c8] underline">2 個の自動調整ではない注釈を削除</a>
      <svg viewBox="0 0 20 16" className="absolute left-[139px] top-[81px] w-5 h-4" aria-hidden="true">
        <path d="M2 0v1.500L17 15V0z" fill="#ffffe1" />
        <path d="M2 1.500 17 15V1.500" fill="none" stroke="#333" />
      </svg>
    </aside>
  );
}

export default function App() {
  const [balloon, setBalloon] = useState(true);

  return (
    <div className="min-h-screen flex flex-col bg-black pt-[17px] pb-[17px] pr-[2px] text-[10px] font-['Noto_Sans','Noto_Sans_CJK_JP',sans-serif]">
      <div className="relative flex-1 flex flex-col rounded-t-lg rounded-b pl-[7px] pr-1 pb-[5px] bg-linear-to-r from-[#ccd5df] via-[#c9dbea] to-[#c3d3e6]">
        <Header />
        <Ribbon />
        <div className="h-[5px] bg-linear-to-b from-[#606060] to-[#9a9a9a]" />
        <Canvas />
        <LayoutTabs />
        <StatusBar />
        {balloon && <Balloon onClose={() => setBalloon(false)} />}
      </div>
    </div>
  );
}
